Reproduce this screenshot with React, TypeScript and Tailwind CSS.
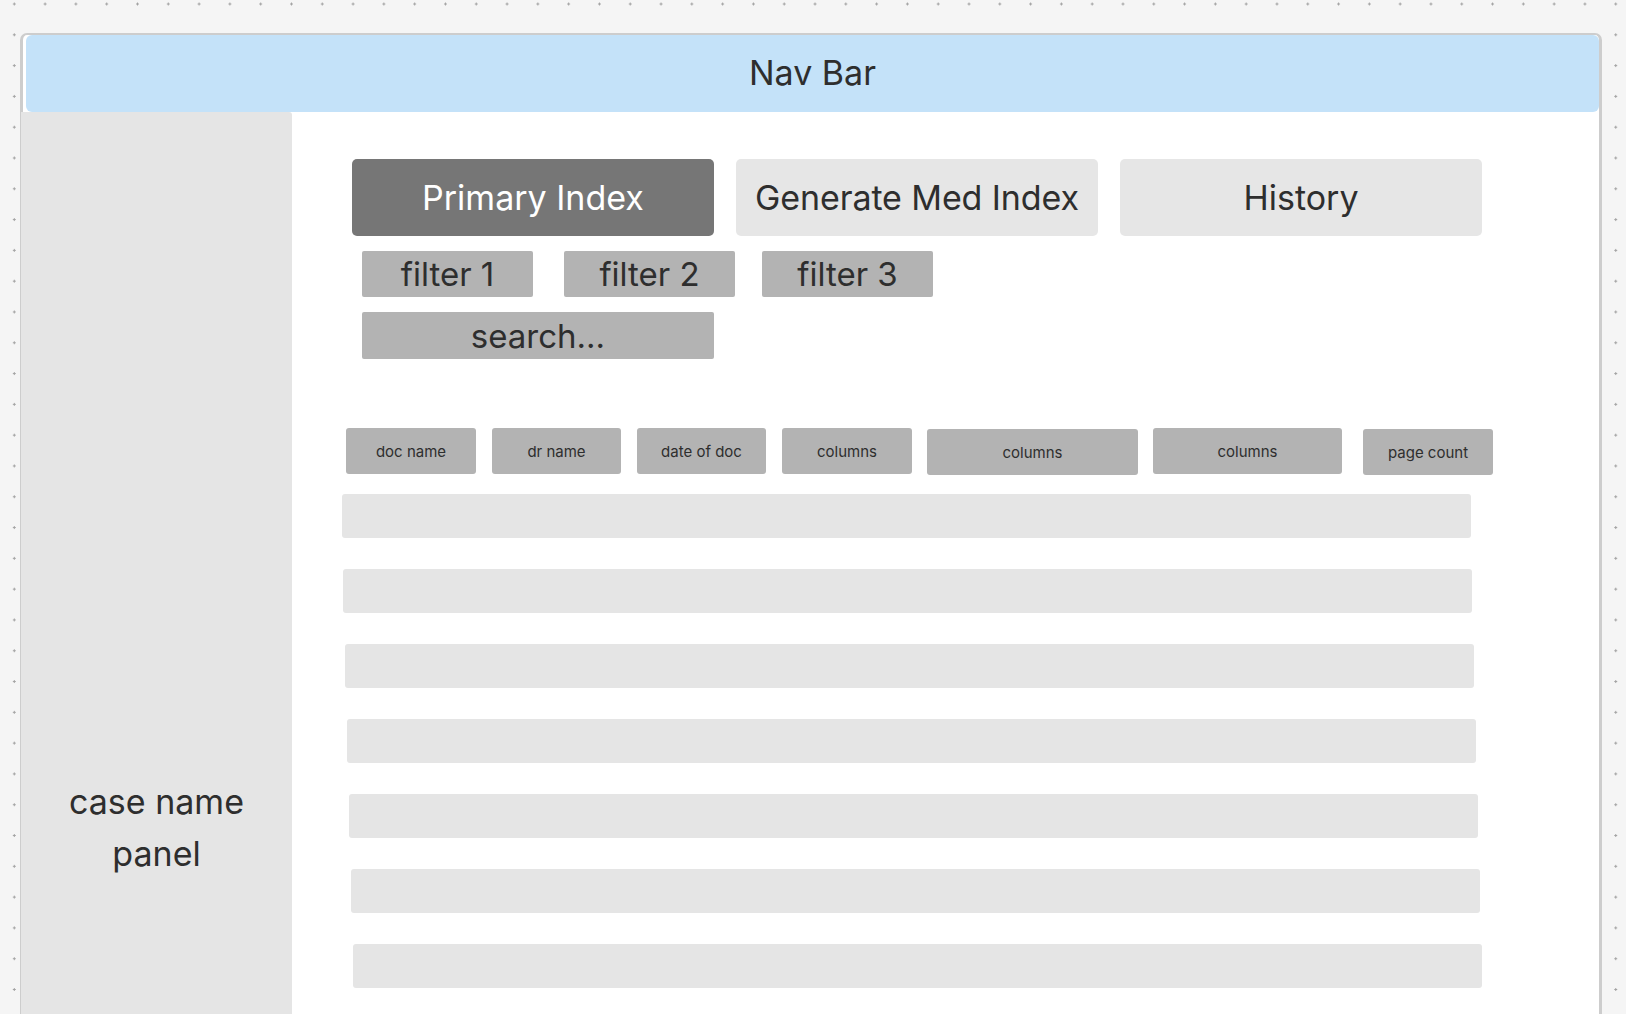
import React from 'react';

const headers = [
  { label: 'doc name', cls: 'w-[130px]' },
  { label: 'dr name', cls: 'w-[129px] ml-[16px]' },
  { label: 'date of doc', cls: 'w-[129px] ml-[16px]' },
  { label: 'columns', cls: 'w-[130px] ml-[16px]' },
  { label: 'columns', cls: 'w-[211px] ml-[15px] mt-[1px]' },
  { label: 'columns', cls: 'w-[189px] ml-[15px]' },
  { label: 'page count', cls: 'w-[130px] ml-[21px] mt-[1px]' },
];

// rows drift a couple of px to the right as they go down
const rowOffsets = ['ml-[0px]', 'ml-[1px]', 'ml-[3px]', 'ml-[5px]', 'ml-[7px]', 'ml-[9px]', 'ml-[11px]'];

export default function App() {
  return (
    <div className="w-[1626px] h-[1014px] overflow-hidden bg-[#f5f5f5] bg-[radial-gradient(circle,#a3a3a3_1px,transparent_1.4px)] bg-[length:30.8px_30.8px] bg-[position:-1.1px_-11.4px] pt-[33px] pl-[20px] font-['Inter',sans-serif] text-[#2e2e2e]">
      <div className="w-[1582px] h-[1100px] rounded-t-[7px] border-t-2 border-x-[3px] border-[#cdcdcd] bg-white flex flex-col">
        <div className="ml-[3px] h-[77px] shrink-0 rounded-[6px] bg-[#c4e2f9] flex items-center justify-center pb-[2px] text-[34px]">
          Nav Bar
        </div>

        <div className="flex flex-1">
          <aside className="-ml-[2px] w-[271px] bg-[#e5e5e5] rounded-tr-[3px] pt-[664px] text-center text-[34px] leading-[52px]">
            case name
            <br />
            panel
          </aside>

          <main className="flex-1 pl-[60px] pt-[47px]">
            <div className="flex gap-[22px] text-[34px]">
              <button className="w-[362px] h-[77px] rounded-[5px] bg-[#767676] text-white flex items-center justify-center">
                Primary Index
              </button>
              <button className="w-[362px] h-[77px] rounded-[5px] bg-[#e6e6e6] tracking-[-0.1px] flex items-center justify-center">
                Generate Med Index
              </button>
              <button className="w-[362px] h-[77px] rounded-[5px] bg-[#e6e6e6] flex items-center justify-center">
                History
              </button>
            </div>

            <div className="flex ml-[10px] mt-[15px] text-[33px]">
              <div className="w-[171px] h-[46px] pt-[2px] rounded-[2px] bg-[#b3b3b3] flex items-center justify-center">filter 1</div>
              <div className="w-[171px] h-[46px] pt-[2px] ml-[31px] rounded-[2px] bg-[#b3b3b3] flex items-center justify-center">filter 2</div>
              <div className="w-[171px] h-[46px] pt-[2px] ml-[27px] rounded-[2px] bg-[#b3b3b3] flex items-center justify-center">filter 3</div>
            </div>

            <div className="ml-[10px] mt-[15px] w-[352px] h-[47px] pt-[2px] rounded-[2px] bg-[#b3b3b3] flex items-center justify-center text-[33px]">
              search...
            </div>

            <div className="flex items-start -ml-[6px] mt-[69px] text-[15px]">
              {headers.map((h, i) => (
                <div key={i} className={`${h.cls} h-[46px] pt-[2px] rounded-[3px] bg-[#b3b3b3] flex items-center justify-center`}>
                  {h.label}
                </div>
              ))}
            </div>

            <div className="-ml-[10px] mt-[19px] flex flex-col gap-[31px]">
              {rowOffsets.map((off, i) => (
                <div key={i} className={`${off} w-[1129px] h-[44px] rounded-[3px] bg-[#e5e5e5]`} />
              ))}
            </div>
          </main>
        </div>
      </div>
    </div>
  );
}
